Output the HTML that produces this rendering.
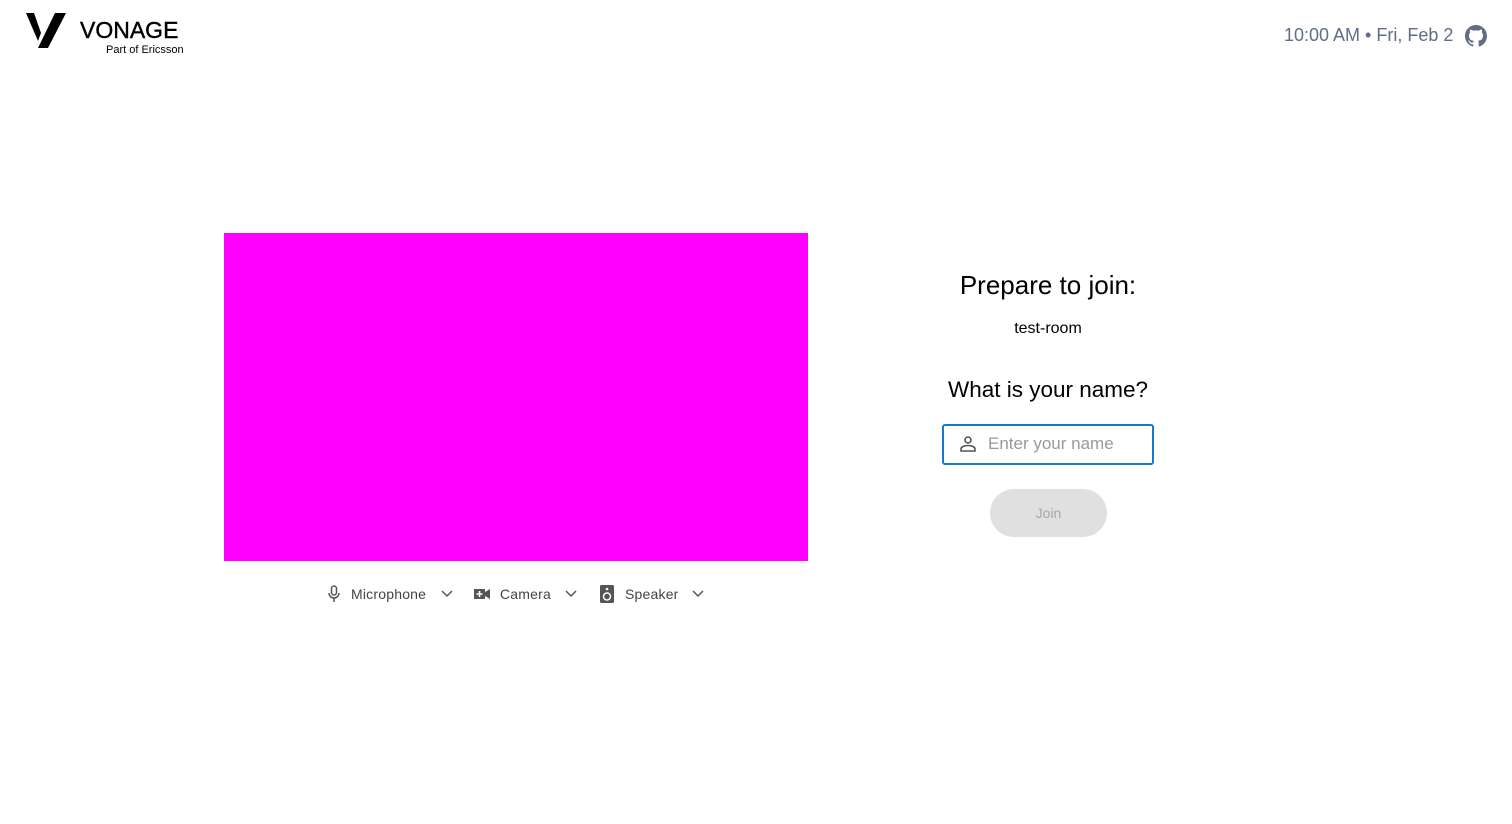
<!DOCTYPE html>
<html><head><meta charset="utf-8"><style>
body{margin:0;width:1512px;height:824px;background:#fff;font-family:"Liberation Sans",sans-serif;position:relative;overflow:hidden}
.a{position:absolute}
</style></head><body>
<svg class="a" style="left:26px;top:13px" width="40" height="35" viewBox="0 0 40 35"><path d="M0 0H8L15 20L12 28Z" fill="#000"/><path d="M29 0H40L22 35H12Z" fill="#000"/></svg>
<div class="a" style="left:80px;top:17px;font-size:23px;color:#000;-webkit-text-stroke:0.4px #000">VONAGE</div>
<div class="a" style="left:106px;top:44px;font-size:11px;color:#000">Part of Ericsson</div>
<div class="a" style="left:1284px;top:25px;font-size:18px;color:#5f6e86">10:00 AM • Fri, Feb 2</div>
<svg class="a" style="left:1465px;top:25px" width="22" height="22" viewBox="0 0 16 16"><path fill="#5f6e86" d="M8 0C3.58 0 0 3.580 0 8c0 3.54 2.29 6.53 5.470 7.59.4.07.55-.17.55-.38v-1.33c-2.23.48-2.7-1.07-2.7-1.07-.36-.92-.89-1.17-.89-1.17-.73-.5.05-.49.05-.49.8.06 1.23.83 1.23.83.72 1.23 1.87.87 2.33.67.07-.52.28-.87.5-1.07-1.78-.2-3.65-.89-3.65-3.95 0-.87.31-1.59.83-2.15-.08-.2-.36-1.02.08-2.12 0 0 .67-.21 2.2.82A7.600 7.6 0 0 1 8 3.87c.68 0 1.36.09 2 .27 1.53-1.04 2.2-.82 2.2-.82.44 1.1.16 1.92.08 2.12.51.56.82 1.27.82 2.15 0 3.07-1.87 3.75-3.65 3.95.29.25.54.73.54 1.48v2.2c0 .21.15.46.55.38A8 8 0 0 0 16 8c0-4.42-3.58-8-8-8z"/></svg>
<div class="a" style="left:224px;top:233px;width:584px;height:328px;background:#ff00ff"></div>
<svg class="a" style="left:326px;top:585px" width="16" height="18" viewBox="0 0 16 18"><rect x="5.5" y="1" width="5" height="9" rx="2.5" fill="none" stroke="#555" stroke-width="1.5"/><path d="M3 8a5 5 0 0 0 10 0M8 13v4" fill="none" stroke="#555" stroke-width="1.5"/></svg>
<div class="a" style="left:351px;top:586px;font-size:14px;color:#444;letter-spacing:0.2px">Microphone</div>
<svg class="a" style="left:441px;top:590px" width="12" height="8"><path d="M1 1l5 5 5-5" fill="none" stroke="#555" stroke-width="1.5"/></svg>
<svg class="a" style="left:473px;top:587px" width="18" height="14"><rect x="1" y="2" width="11" height="10" fill="#555"/><path d="M12 5l5-3v10l-5-3z" fill="#555"/><path d="M6.5 4v6M3.5 7h6" stroke="#fff" stroke-width="1.6"/></svg>
<div class="a" style="left:500px;top:586px;font-size:14px;color:#444;letter-spacing:0.2px">Camera</div>
<svg class="a" style="left:565px;top:590px" width="12" height="8"><path d="M1 1l5 5 5-5" fill="none" stroke="#555" stroke-width="1.5"/></svg>
<svg class="a" style="left:600px;top:585px" width="14" height="18"><rect x="0" y="0" width="14" height="18" rx="1.5" fill="#555"/><circle cx="7" cy="11.5" r="3.5" fill="none" stroke="#fff" stroke-width="1.5"/><circle cx="7" cy="4" r="1.3" fill="#fff"/></svg>
<div class="a" style="left:625px;top:586px;font-size:14px;color:#444;letter-spacing:0.2px">Speaker</div>
<svg class="a" style="left:692px;top:590px" width="12" height="8"><path d="M1 1l5 5 5-5" fill="none" stroke="#555" stroke-width="1.5"/></svg>
<div class="a" style="left:848px;top:270px;width:400px;text-align:center;font-size:26px;color:#000">Prepare to join:</div>
<div class="a" style="left:848px;top:320px;width:400px;text-align:center;font-size:16px;color:#000">test-room</div>
<div class="a" style="left:848px;top:377px;width:400px;text-align:center;font-size:22.5px;color:#000">What is your name?</div>
<div class="a" style="left:942px;top:424px;width:208px;height:37px;border:2px solid #1c74d3;border-radius:3px"></div>
<svg class="a" style="left:959px;top:435px" width="18" height="18" viewBox="0 0 18 18"><circle cx="9" cy="5" r="3" fill="none" stroke="#555" stroke-width="1.6"/><path d="M2 16v-2c0-2 3-3.5 7-3.5s7 1.5 7 3.5v2z" fill="none" stroke="#555" stroke-width="1.6"/></svg>
<div class="a" style="left:988px;top:434px;font-size:17px;color:#999">Enter your name</div>
<div class="a" style="left:990px;top:489px;width:117px;height:48px;border-radius:24px;background:#e0e0e0;color:#a8a8a8;font-size:14px;text-align:center;line-height:48px">Join</div>
</body></html>
